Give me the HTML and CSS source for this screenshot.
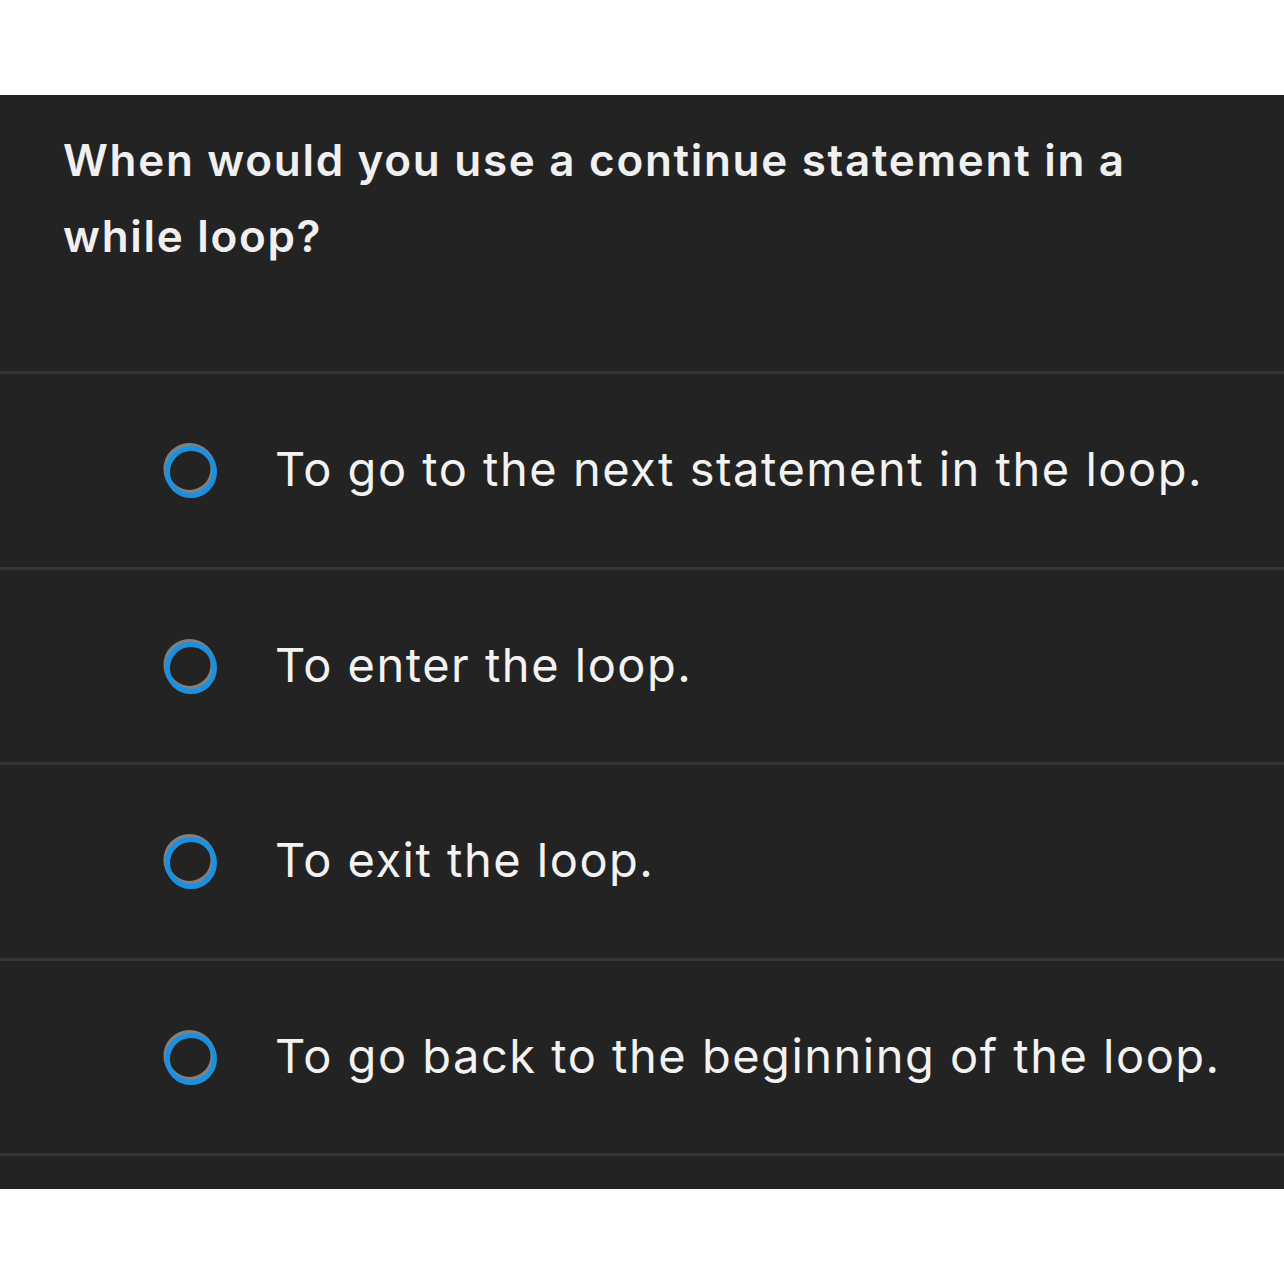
FILE: index.html
```html
<!DOCTYPE html>
<html>
<head>
<meta charset="utf-8">
<link rel="stylesheet" href="styles.css">
</head>
<body>
<div class="panel">
  <div class="question">When would you use a continue statement in a while loop?</div>
  <div class="options">
    <div class="option"><svg class="radio" viewBox="0 0 60 60" width="60" height="60"><circle cx="28.5" cy="28" r="23.5" fill="none" stroke="#808080" stroke-width="5"/><circle cx="30" cy="31" r="23.5" fill="none" stroke="#1b8fe0" stroke-width="5"/></svg><span class="label">To go to the next statement in the loop.</span></div>
    <div class="option"><svg class="radio" viewBox="0 0 60 60" width="60" height="60"><circle cx="28.5" cy="28" r="23.5" fill="none" stroke="#808080" stroke-width="5"/><circle cx="30" cy="31" r="23.5" fill="none" stroke="#1b8fe0" stroke-width="5"/></svg><span class="label">To enter the loop.</span></div>
    <div class="option"><svg class="radio" viewBox="0 0 60 60" width="60" height="60"><circle cx="28.5" cy="28" r="23.5" fill="none" stroke="#808080" stroke-width="5"/><circle cx="30" cy="31" r="23.5" fill="none" stroke="#1b8fe0" stroke-width="5"/></svg><span class="label">To exit the loop.</span></div>
    <div class="option"><svg class="radio" viewBox="0 0 60 60" width="60" height="60"><circle cx="28.5" cy="28" r="23.5" fill="none" stroke="#808080" stroke-width="5"/><circle cx="30" cy="31" r="23.5" fill="none" stroke="#1b8fe0" stroke-width="5"/></svg><span class="label">To go back to the beginning of the loop.</span></div>
  </div>
</div>
</body>
</html>
```
FILE: styles.css
```css
html, body {
  margin: 0;
  padding: 0;
  background: #ffffff;
}
body {
  font-family: "Inter", "Noto Sans", sans-serif;
}
.panel {
  margin-top: 95px;
  height: 1094px;
  background: #232323;
  overflow: hidden;
}
.question {
  box-sizing: border-box;
  height: 279px;
  padding: 27px 120px 0 63px;
  font-size: 44px;
  font-weight: 600;
  letter-spacing: 1.7px;
  line-height: 76px;
  color: #f0f0f0;
  border-bottom: 3px solid #353535;
}
.option {
  box-sizing: border-box;
  height: 195.5px;
  display: flex;
  align-items: center;
  gap: 54px;
  padding-left: 161px;
  border-bottom: 3px solid #353535;
}
.radio {
  display: block;
  flex: none;
  margin-top: 2px;
}
.label {
  font-size: 47px;
  font-weight: 400;
  letter-spacing: 1.5px;
  color: #f2f2f2;
  white-space: nowrap;
  margin-top: -3px;
}
```
